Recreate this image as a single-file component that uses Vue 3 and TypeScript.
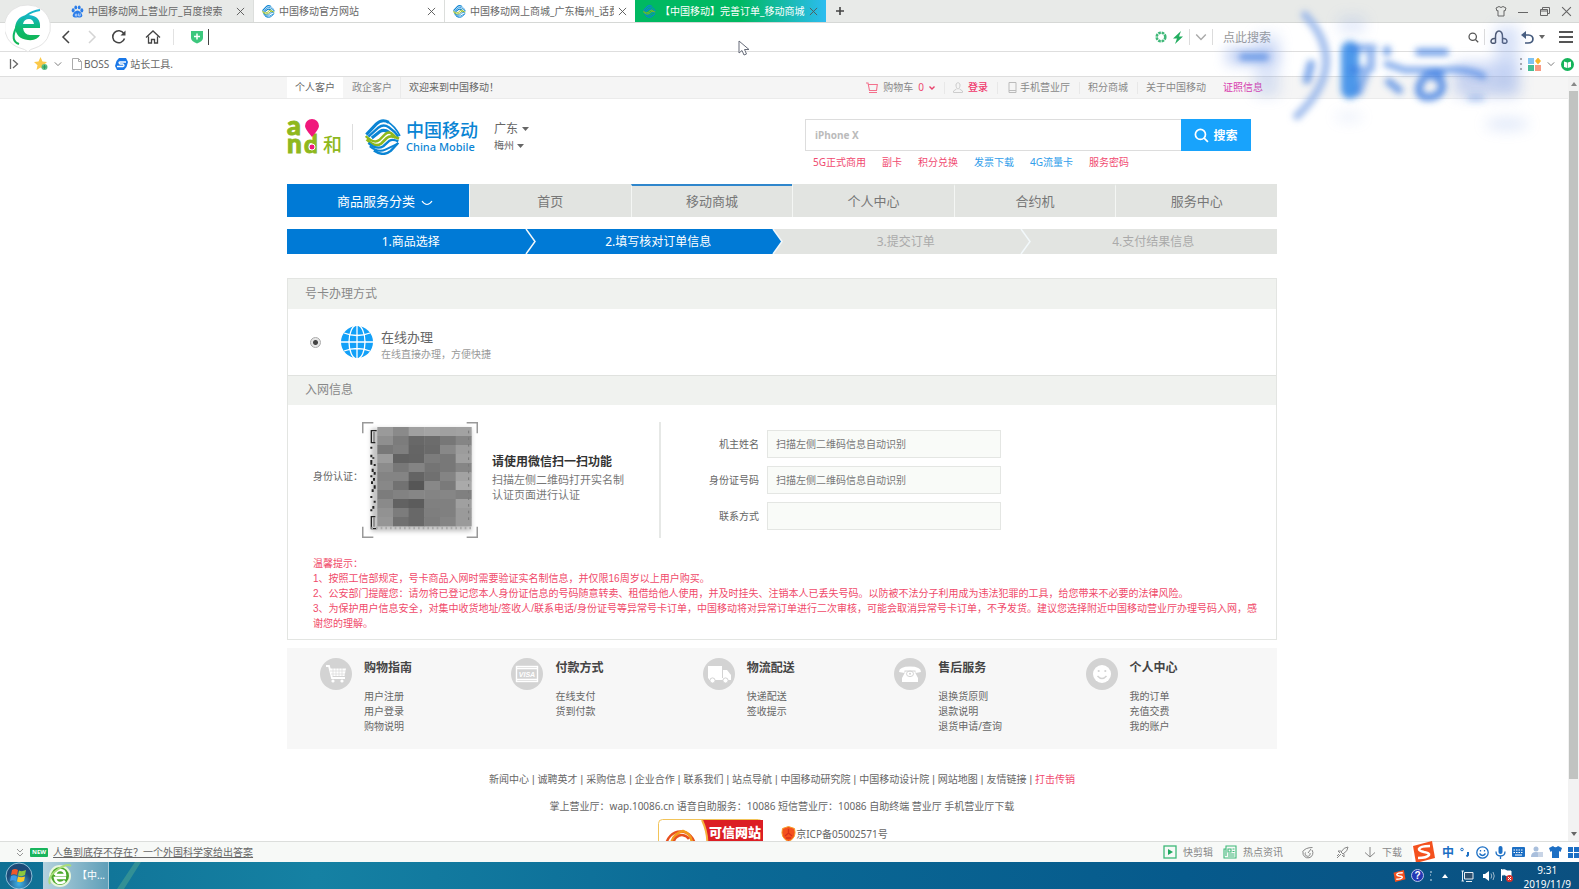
<script setup lang="ts">
import { ref } from 'vue'

interface LinkItem { text: string; tone?: string }
interface ServiceGroup { icon: string; title: string; links: string[] }

const tabs = [
  { title: '中国移动网上营业厅_百度搜索', kind: 'baidu' },
  { title: '中国移动官方网站', kind: 'mobile' },
  { title: '中国移动网上商城_广东梅州_话费', kind: 'mobile' },
  { title: '【中国移动】完善订单_移动商城', kind: 'active' },
]
const hotLinks: LinkItem[] = [
  { text: '5G正式商用', tone: 'pink' },
  { text: '副卡', tone: 'pink' },
  { text: '积分兑换', tone: 'pink' },
  { text: '发票下载', tone: 'sky' },
  { text: '4G流量卡', tone: 'sky' },
  { text: '服务密码', tone: 'pink' },
]
const navItems = ['首页', '移动商城', '个人中心', '合约机', '服务中心']
const steps = ['1.商品选择', '2.填写核对订单信息', '3.提交订单', '4.支付结果信息']
const fields = [
  { id: 'owner', label: '机主姓名', hint: '扫描左侧二维码信息自动识别' },
  { id: 'idno', label: '身份证号码', hint: '扫描左侧二维码信息自动识别' },
  { id: 'phone', label: '联系方式', hint: '' },
]
const tips = [
  '温馨提示：',
  '1、按照工信部规定，号卡商品入网时需要验证实名制信息，并仅限16周岁以上用户购买。',
  '2、公安部门提醒您：请勿将已登记您本人身份证信息的号码随意转卖、租借给他人使用，并及时挂失、注销本人已丢失号码。以防被不法分子利用成为违法犯罪的工具，给您带来不必要的法律风险。',
  '3、为保护用户信息安全，对集中收货地址/签收人/联系电话/身份证号等异常号卡订单，中国移动将对异常订单进行二次审核，可能会取消异常号卡订单，不予发货。建议您选择附近中国移动营业厅办理号码入网，感谢您的理解。',
]
const services: ServiceGroup[] = [
  { icon: 'cart', title: '购物指南', links: ['用户注册', '用户登录', '购物说明'] },
  { icon: 'card', title: '付款方式', links: ['在线支付', '货到付款'] },
  { icon: 'truck', title: '物流配送', links: ['快递配送', '签收提示'] },
  { icon: 'phone', title: '售后服务', links: ['退换货原则', '退款说明', '退货申请/查询'] },
  { icon: 'smile', title: '个人中心', links: ['我的订单', '充值交费', '我的账户'] },
]
const footLinks = ['新闻中心', '诚聘英才', '采购信息', '企业合作', '联系我们', '站点导航', '中国移动研究院', '中国移动设计院', '网站地图', '友情链接', '打击传销']

const mosaic: string[][] = [
  '9a 8a a0 a4 a0 a2', '8f 7c 68 6c 77 85', '78 7f 65 6a 88 9c', '9c 62 64 7c 78 a0',
  '8c 78 84 74 78 86', '84 84 64 70 84 a2', '88 72 56 88 7a aa', '7c 82 86 84 86 80',
  '8a 62 5c 80 80 a0', '92 7c 68 7e 80 9a', '96 70 68 7c 84 9a',
].map((row) => row.split(' ').map((v) => `#${v}${v}${v}`))

const province = ref('广东')
const city = ref('梅州')
const method = ref('online')
const keyword = ref('')
const address = ref('')
</script>

<template>
  <div class="screen">
    <svg class="defs" width="0" height="0" aria-hidden="true">
      <symbol id="cm" viewBox="0 0 106 106">
        <g fill="none">
          <path stroke="#0a84d4" stroke-width="9" d="M4 46 L33 15 Q50 -2 70 10" />
          <path stroke="#0a84d4" stroke-width="5" d="M66 8 Q88 20 103 50" />
          <path stroke="#0a84d4" stroke-width="7" d="M10 52 L40 25 Q54 14 70 24 Q88 36 98 52" />
          <path stroke="#0a84d4" stroke-width="9" d="M20 56 L44 37 Q56 29 72 40" />
          <path stroke="#8fb81d" stroke-width="7" d="M2 50 Q26 74 42 62 L58 46 Q74 30 90 56" />
          <path stroke="#8fb81d" stroke-width="8" d="M5 60 Q30 86 48 72 L64 56 Q76 46 100 58" />
          <path stroke="#0a84d4" stroke-width="7" d="M10 70 Q34 92 54 80 L72 64 Q82 58 98 66" />
          <path stroke="#0a84d4" stroke-width="6" d="M14 80 Q38 100 60 90 L94 74" />
          <path stroke="#0a84d4" stroke-width="7" d="M26 93 Q54 112 76 94 L98 70" />
        </g>
      </symbol>
      <symbol id="cross" viewBox="0 0 10 10"><path d="M1 1 L9 9 M9 1 L1 9" stroke="currentColor" fill="none" /></symbol>
      <symbol id="chev" viewBox="0 0 10 10"><path d="M1 3 L5 7 L9 3" stroke="currentColor" fill="none" stroke-width="1.2" /></symbol>
      <symbol id="lens" viewBox="0 0 14 14"><g fill="none" stroke="currentColor" stroke-width="1.6"><circle cx="6" cy="6" r="4.7" /><path d="M9.5 9.5 L13 13" /></g></symbol>
      <symbol id="sogou" viewBox="0 0 24 22">
        <path d="M1 5 L20 0 L23 17 L4 22 Z" fill="#f4511e" />
        <path d="M18 5 Q8 5 7 8 Q7 10 12 11 Q18 12 17 14 Q15 17 6 17" fill="none" stroke="#fff" stroke-width="2.6" />
      </symbol>
    </svg>

    <!-- browser chrome -->
    <header class="chrome">
      <div class="tabstrip">
        <div v-for="(t, i) in tabs" :key="i" class="tab" :class="[t.kind, { first: i === 0 }]">
          <svg v-if="t.kind === 'baidu'" class="fav" viewBox="0 0 12 12"><g fill="#2b7de9"><ellipse cx="2" cy="5" rx="1.4" ry="1.9" /><ellipse cx="4.4" cy="2.2" rx="1.3" ry="1.8" /><ellipse cx="7.6" cy="2.2" rx="1.3" ry="1.8" /><ellipse cx="10" cy="5" rx="1.4" ry="1.9" /><path d="M6 5 C8 5 10.500 8 10.500 9.800 C10 12.500 7.500 11.300 6 11.300 C4.500 11.300 2 12.500 1.500 9.800 C1.500 8 4 5 6 5Z" /></g><path d="M4 8.500h1.500v1.600H4z M7 7.800v2.300h1.500v-2.300" fill="none" stroke="#e9f1fc" stroke-width=".6" /></svg>
          <svg v-else class="fav"><use href="#cm" /></svg>
          <span class="tab-title">{{ t.title }}</span>
          <button class="bare tab-x" aria-label="关闭标签"><svg width="9" height="9"><use href="#cross" /></svg></button>
        </div>
        <button class="bare plus" aria-label="新建标签"><svg width="10" height="10" viewBox="0 0 10 10"><path d="M5 1V9M1 5H9" stroke="#444" stroke-width="1.6" /></svg></button>
        <div class="win-btns">
          <button class="bare" aria-label="皮肤"><svg width="12" height="12" viewBox="0 0 12 12"><path d="M4 1.500 L1 3 L2 6 L3 5.500 V11 H9 V5.500 L10 6 L11 3 L8 1.500 Q6 3.500 4 1.500Z" fill="none" stroke="#666" /></svg></button>
          <button class="bare" aria-label="最小化"><svg width="12" height="12" viewBox="0 0 12 12"><path d="M1 7.500H11" stroke="#666" /></svg></button>
          <button class="bare" aria-label="还原"><svg width="12" height="12" viewBox="0 0 12 12"><path d="M1.500 4.500H8.500V10.500H1.500ZM3.500 4.500V2.500H10.500V8.500H8.500M1.500 6h7" fill="none" stroke="#666" /></svg></button>
          <button class="bare" aria-label="关闭"><svg width="11" height="11"><use href="#cross" /></svg></button>
        </div>
      </div>

      <div class="addressbar">
        <div class="nav-icons">
          <button class="bare" aria-label="后退"><svg width="14" height="14" viewBox="0 0 14 14"><path d="M10 1 L4 7 L10 13" fill="none" stroke="#444" stroke-width="1.5" /></svg></button>
          <button class="bare" aria-label="前进"><svg width="14" height="14" viewBox="0 0 14 14"><path d="M4 1 L10 7 L4 13" fill="none" stroke="#d4d4d4" stroke-width="1.5" /></svg></button>
          <button class="bare" aria-label="刷新"><svg width="16" height="16" viewBox="0 0 16 16"><path d="M13.500 9.500 A6 6 0 1 1 12.800 4.500" fill="none" stroke="#444" stroke-width="1.500" /><path d="M14.500 1.500V6.500H9.500Z" fill="#444" /></svg></button>
          <button class="bare" aria-label="主页"><svg width="16" height="16" viewBox="0 0 16 16"><path d="M1 8.500 L8 2 L15 8.500 M3.500 7.500V14H6.500V10.500H9.500V14H12.500V7.500" fill="none" stroke="#444" stroke-width="1.300" /></svg></button>
        </div>
        <svg class="shield" width="12" height="14" viewBox="0 0 12 14"><path d="M0 1H12V8Q12 11 6 13.500Q0 11 0 8Z" fill="#3cc77d" /><path d="M6 3.500V9.500M3 6.500H9" stroke="#fff" stroke-width="1.500" /></svg>
        <span class="caret"></span>
        <input v-model="address" class="address" type="text" aria-label="地址栏" />
        <div class="addr-right">
          <svg width="12" height="12" viewBox="0 0 12 12"><circle cx="6" cy="6" r="4.300" fill="none" stroke="#3fb878" stroke-width="2.600" stroke-dasharray="2.600 .8" /></svg>
          <svg width="12" height="13" viewBox="0 0 12 13"><path d="M9 0 L1 7.500 H5 L3 13 L11 5.500 H7Z" fill="#22ad5f" /></svg>
          <i class="vr"></i>
          <svg width="12" height="12" class="soft"><use href="#chev" /></svg>
          <i class="vr"></i>
        </div>
        <input v-model="keyword" class="quick" type="text" aria-label="快速搜索" placeholder="点此搜索" />
        <div class="addr-end">
          <svg width="11" height="11" class="dark"><use href="#lens" /></svg>
          <i class="vr"></i>
          <svg width="18" height="15" viewBox="0 0 18 15"><path d="M5.500 13V7 C5 -1 13 -1 12.500 7 V13 M5.500 8.500 C2 8 1 10 1 11.500 C1 13.500 3 13.500 5.500 13 M12.500 8.500 C16 8 17 10 17 11.500 C17 13.500 15 13.500 12.500 13" fill="none" stroke="#444e63" stroke-width="1.500" /></svg>
          <svg class="undo" width="13" height="13" viewBox="0 0 13 13"><path d="M3 4H7.500C13.500 4 13.500 12 7 12H4" fill="none" stroke="#445a7c" stroke-width="1.700" /><path d="M5 0V8L0 4Z" fill="#445a7c" /></svg>
          <svg width="6" height="4" viewBox="0 0 6 4"><path d="M0 0H6L3 4Z" fill="#666" /></svg>
          <svg class="menu" width="14" height="12" viewBox="0 0 14 12"><path d="M0 1H14M0 6H14M0 11H14" stroke="#555" stroke-width="2" /></svg>
        </div>
      </div>

      <div class="bookmarks">
        <svg width="10" height="12" viewBox="0 0 10 12"><path d="M1.500 1V11M4 2L8.500 6L4 10" fill="none" stroke="#666" stroke-width="1.300" /></svg>
        <svg class="star" width="14" height="14" viewBox="0 0 14 14"><path d="M6.500 0L8.500 4.500L13 5L9.500 8.200L10.500 13L6.500 10.500L2.500 13L3.500 8.200L0 5L4.500 4.500Z" fill="#fbc94a" /><circle cx="10.500" cy="10" r="3" fill="#5cbf88" /><path d="M10.500 8V12M8.500 10H12.500" stroke="#2e9b60" /></svg>
        <svg width="8" height="8" class="grey"><use href="#chev" /></svg>
        <a href="#" class="bm boss"><svg width="10" height="12" viewBox="0 0 10 12"><path d="M.5 .5H6.500L9.500 3.500V11.500H.5ZM6.500 .5V3.500H9.500" fill="none" stroke="#aaa" /></svg>BOSS</a>
        <a href="#" class="bm"><svg width="13" height="12" viewBox="0 0 13 12"><path d="M4 0H11L13 4L11.500 9L9 12H2L0 8L1.500 3Z" fill="#1a78e8" /><path d="M11 4H5Q3 4.500 5 6H8Q10 7.500 8 8.500H2" fill="none" stroke="#fff" stroke-width="1.300" /></svg>站长工具.</a>
        <div class="bm-right">
          <svg width="2" height="12" viewBox="0 0 2 12"><path d="M1 0V12" stroke="#aaa" stroke-width="2" stroke-dasharray="2 3" /></svg>
          <svg width="13" height="13" viewBox="0 0 13 13"><rect width="6" height="6" fill="#7fc4f2" /><path d="M10 -.5L13 3L10 6.500L7 3Z" fill="#f7b52c" /><rect y="7" width="6" height="6" fill="#45bf94" /><rect x="7" y="7" width="6" height="6" fill="#f79a82" /></svg>
          <svg width="8" height="8" class="grey"><use href="#chev" /></svg>
          <svg width="13" height="13" viewBox="0 0 13 13"><circle cx="6.500" cy="6.500" r="6.500" fill="#15b35a" /><path d="M3 3.500L6.200 4.500V10L3 9ZM10 3.500L6.800 4.500V10L10 9Z" fill="#fff" /></svg>
        </div>
      </div>

      <svg class="ie-logo" width="46" height="54" viewBox="0 0 46 54">
        <defs><linearGradient id="eg" x1="0" y1="0" x2="0" y2="1"><stop offset="0" stop-color="#17b4d4" /><stop offset=".5" stop-color="#0dbb74" /><stop offset="1" stop-color="#12b555" /></linearGradient></defs>
        <path d="M23 5 A22 22 0 0 1 30 48 Q25 49 23 52 Q20 49 15 48 A22 22 0 0 1 23 5Z" fill="#fff" stroke="#e4e4e4" />
        <path d="M35 28 H18 Q19 35 25 35 H35 Q32 41 23 40 Q11 39 10 27 Q12 15 24 15 Q36 16 35 28 M18 24 H29 Q28 19 24 19 Q19 19 18 24Z" fill="url(#eg)" fill-rule="evenodd" />
        <path d="M35 10 Q20 12 11 28 Q5 41 14 44" fill="none" stroke="url(#eg)" stroke-width="2" />
      </svg>
    </header>

    <!-- web page -->
    <div class="viewport">
      <main class="page">
        <div class="topbar band">
          <div class="inner topbar-row">
            <a href="#" class="who on">个人客户</a>
            <a href="#" class="who">政企客户</a>
            <span class="hello">欢迎来到中国移动！</span>
            <div class="top-right">
              <a href="#" class="cart"><svg width="12" height="12" viewBox="0 0 12 12"><path d="M0 1H2L3.500 8.500H10.500L11.300 2.500H2.500M3 10.500H11" fill="none" stroke="#f4708c" stroke-width="1.100" /></svg>购物车 <b>0</b><svg width="6" height="4" viewBox="0 0 6 4"><path d="M.5 .5L3 3L5.500 .5" fill="none" stroke="#e8416c" stroke-width="1.400" /></svg></a>
              <a href="#" class="login"><svg width="10" height="11" viewBox="0 0 10 11"><path d="M3.500 7L.5 9V10.500H9.500V9L6.500 7M3 3C3 0 7 0 7 3C7 5 6 7 5 7C4 7 3 5 3 3Z" fill="none" stroke="#ccc" /></svg>登录</a>
              <a href="#" class="mobi"><svg width="9" height="11" viewBox="0 0 9 11"><path d="M1 .5H8V10.500H1ZM1 8.500H8" fill="none" stroke="#bbb" /></svg>手机营业厅</a>
              <a href="#" class="plain">积分商城</a>
              <a href="#" class="plain">关于中国移动</a>
              <a href="#" class="cert">证照信息</a>
            </div>
          </div>
        </div>

        <div class="band">
          <div class="inner header">
            <svg class="and-logo" width="56" height="36" viewBox="0 0 56 36">
              <g fill="#8fb81d" stroke="#8fb81d" font-family="Lato, sans-serif" font-weight="900"><text x="0" y="16" font-size="27">a</text><text x="0" y="34" font-size="26">n</text><text x="17" y="34" font-size="24">d</text><text x="36" y="33" font-size="19" font-weight="500" stroke="none" font-family="Noto Sans CJK SC, sans-serif">和</text></g>
              <path d="M25 18Q18 10 18 7A7 7 0 0 1 32 7Q32 10 25 18Z" fill="#f0187c" />
              <circle cx="25" cy="28" r="3" fill="#f0187c" stroke="#fff" />
            </svg>
            <i class="logo-split"></i>
            <svg class="cm-logo" width="36" height="36"><use href="#cm" /></svg>
            <div class="brand"><strong>中国移动</strong><span>China Mobile</span></div>
            <div class="region">
              <label class="pick prov"><select v-model="province" aria-label="省份"><option>广东</option></select><svg width="7" height="4" viewBox="0 0 7 4"><path d="M0 0H7L3.500 4Z" fill="#666" /></svg></label>
              <label class="pick"><select v-model="city" aria-label="城市"><option>梅州</option></select><svg width="7" height="4" viewBox="0 0 7 4"><path d="M0 0H7L3.500 4Z" fill="#666" /></svg></label>
            </div>
            <div class="search">
              <form class="search-row" @submit.prevent>
                <input type="text" aria-label="商品搜索" placeholder="iPhone X" />
                <button type="submit"><svg width="15" height="15"><use href="#lens" /></svg>搜索</button>
              </form>
              <div class="hot"><a v-for="h in hotLinks" :key="h.text" href="#" :class="h.tone">{{ h.text }}</a></div>
            </div>
          </div>
        </div>

        <div class="band">
          <div class="inner">
            <nav class="mainnav">
              <a href="#" class="all">商品服务分类<svg width="12" height="10" viewBox="0 0 12 10"><path d="M1 4Q3.500 7.500 6 7.500T11 4" stroke="currentColor" fill="none" stroke-width="1.200" /></svg></a>
              <a v-for="(n, i) in navItems" :key="n" href="#" :class="{ current: i === 1 }">{{ n }}</a>
            </nav>

            <ol class="steps">
              <li v-for="(s, i) in steps" :key="s" :class="{ done: i < 2 }">
                {{ s }}
                <svg v-if="i < 3" class="tip" :class="{ turn: i === 1 }" width="12" height="25" viewBox="0 0 12 25" preserveAspectRatio="none">
                  <path v-if="i === 1" d="M1 0H12V25H1L10 12.500Z" fill="#e2e4e1" />
                  <path d="M1 0L10 12.500L1 25" fill="none" stroke="#f2f8fb" stroke-width="1.500" />
                </svg>
              </li>
            </ol>

            <section class="panel">
              <h2>号卡办理方式</h2>
              <label class="method">
                <input v-model="method" type="radio" name="method" value="online" />
                <svg width="32" height="32" viewBox="0 0 32 32"><circle cx="16" cy="16" r="16" fill="#12a0f8" /><g fill="none" stroke="#fff" stroke-width="1.300"><path d="M16 0V32M0 16H32M3 7Q16 12 29 7M3 25Q16 20 29 25" /><ellipse cx="16" cy="16" rx="8" ry="17" /></g></svg>
                <span class="method-text"><strong>在线办理</strong><span>在线直接办理，方便快捷</span></span>
              </label>
              <h2 class="second">入网信息</h2>
              <div class="identity">
                <span class="id-label">身份认证：</span>
                <svg class="qr" width="116" height="116" viewBox="0 0 348 348">
                  <defs><filter id="soft"><feGaussianBlur stdDeviation="7" /></filter></defs>
                  <path d="M2 34V2H34M314 2H346V34M346 314V346H314M34 346H2V314" fill="none" stroke="#999" stroke-width="5" />
                  <rect x="28" y="20" width="300" height="308" fill="#c4c4c4" filter="url(#soft)" />
                  <path d="M44 26H28V62H40M40 284H28V320H44" fill="none" stroke="#222" stroke-width="4" />
                  <path d="M36 30V60M36 286V314" stroke="#777" stroke-width="4" />
                  <path d="M28 74V80M28 98V106M34 106V110M28 114V128M38 126V132M32 140V150M38 150V158M28 160V166M36 168V176M30 178V186M38 190V200M32 202V210M28 222V228M38 236V242M34 252V260M28 262V268" stroke="#222" stroke-width="6" />
                  <path d="M28 318H328" stroke="#aaa" stroke-width="8" stroke-dasharray="5 9" />
                  <g v-for="(row, r) in mosaic" :key="r"><rect v-for="(c, k) in row" :key="k" :x="46 + k * 47" :y="15 + r * 27" width="48" height="28" :fill="c" /></g>
                  <path d="M320 26V302" stroke="#777" stroke-width="3" stroke-dasharray="8 12" />
                </svg>
                <div class="scan"><strong>请使用微信扫一扫功能</strong><p>扫描左侧二维码打开实名制<br />认证页面进行认证</p></div>
                <i class="split"></i>
                <div class="fields">
                  <template v-for="f in fields" :key="f.id">
                    <label :for="f.id">{{ f.label }}</label>
                    <input :id="f.id" type="text" :placeholder="f.hint" />
                  </template>
                </div>
              </div>
              <div class="tips"><p v-for="t in tips" :key="t">{{ t }}</p></div>
            </section>

            <section class="services">
              <div v-for="s in services" :key="s.title" class="service">
                <svg width="32" height="32" viewBox="0 0 32 32">
                  <circle cx="16" cy="16" r="16" fill="#d3d3d3" />
                  <g v-if="s.icon === 'cart'"><path d="M6 8H9L12 20H25" fill="none" stroke="#fff" stroke-width="1.800" /><path d="M9.500 10.500H26L24.500 18H11.500Z" fill="#fff" /><path d="M13 10V18M16 10V18M19 10V18M22 10V18M10 13H26M11 16H25" stroke="#d3d3d3" stroke-width=".6" /><circle cx="13" cy="23" r="1.600" fill="#fff" /><circle cx="22" cy="23" r="1.600" fill="#fff" /></g>
                  <g v-else-if="s.icon === 'card'"><rect x="5.500" y="8.500" width="21" height="15" fill="none" stroke="#fff" stroke-width="1.400" /><path d="M6 10.500H26M6 21.500H26" stroke="#fff" stroke-width="1.600" /><text x="16" y="18.500" font-size="7" font-weight="bold" font-style="italic" text-anchor="middle" font-family="Liberation Sans, sans-serif" fill="#fff">VISA</text></g>
                  <g v-else-if="s.icon === 'truck'" fill="#fff"><rect x="5" y="8" width="14" height="12.500" /><path d="M20 12H24L28 17V21H20Z" /><rect x="6" y="20" width="22" height="2" /><circle cx="9.500" cy="22.500" r="2.600" stroke="#d3d3d3" /><circle cx="22.500" cy="22.500" r="2.600" stroke="#d3d3d3" /></g>
                  <g v-else-if="s.icon === 'phone'" fill="#fff"><path d="M5 14Q5 8.500 16 8.500Q27 8.500 27 14L21.500 15V12.500H10.500V15Z" /><path d="M11.500 13.500H20.500L24 20V24H8V20Z" /><ellipse cx="16" cy="15.800" rx="3.500" ry="2.800" fill="none" stroke="#d3d3d3" /><circle cx="16" cy="15.800" r="1" fill="#d3d3d3" /></g>
                  <g v-else><circle cx="16" cy="16" r="9" fill="#fff" /><circle cx="12.700" cy="13" r="1.100" fill="#d3d3d3" /><circle cx="19.300" cy="13" r="1.100" fill="#d3d3d3" /><path d="M11.500 18Q16 23 20.500 18" fill="none" stroke="#d3d3d3" stroke-width="1.500" /></g>
                </svg>
                <div><h3>{{ s.title }}</h3><a v-for="l in s.links" :key="l" href="#">{{ l }}</a></div>
              </div>
            </section>

            <footer class="foot">
              <p class="foot-links"><template v-for="(l, i) in footLinks" :key="l"><span v-if="i" class="bar">|</span><a href="#" :class="{ pink: i === 10 }">{{ l }}</a></template></p>
              <p>掌上营业厅：wap.10086.cn 语音自助服务：10086 短信营业厅：10086 自助终端 营业厅 手机营业厅下载</p>
              <div class="badges">
                <svg width="105" height="36" viewBox="0 0 105 36">
                  <rect x=".5" y=".5" width="104" height="35" rx="4" fill="#fff" stroke="#f2c45a" />
                  <path d="M44 1H105V36H48Q52 18 44 1Z" fill="#dc1e24" /><path d="M44 1Q52 18 48 36" fill="none" stroke="#f6b13c" stroke-width="2" />
                  <g fill="none" stroke-width="2.500"><path d="M8 28A14 15 0 0 1 37 28" stroke="#e8501f" /><path d="M13 30Q12 16 25 12Q34 15 34 26" stroke="#f39a1c" /><path d="M17 32A8 9 0 0 1 31 20" stroke="#e8501f" /></g>
                  <text x="51" y="18" font-size="13" font-weight="900" fill="#fff" font-family="Noto Sans CJK SC, sans-serif">可信网站</text>
                </svg>
                <span class="icp"><svg width="15" height="16" viewBox="0 0 15 16"><path d="M7.500 .5L13.500 2.500Q16 12 7.500 15.500Q-1 12 1.500 2.500Z" fill="#f4511e" stroke="#f8a02c" /><path d="M7.500 3V8M4 10L7.500 7L11 10M5 12H10" stroke="#d8321c" fill="none" stroke-width="1.300" /></svg>京ICP备05002571号</span>
              </div>
            </footer>
          </div>
        </div>
      </main>
      <div class="scrollbar" aria-hidden="true">
        <svg width="6" height="4" viewBox="0 0 6 4"><path d="M0 4H6L3 0Z" fill="#888" /></svg>
        <span class="thumb"></span>
        <svg width="6" height="4" viewBox="0 0 6 4"><path d="M0 0H6L3 4Z" fill="#666" /></svg>
      </div>
    </div>

    <!-- browser status bar -->
    <div class="status">
      <svg width="8" height="9" viewBox="0 0 8 9"><path d="M1 1L4 4L7 1M1 5L4 8L7 5" fill="none" stroke="#999" /></svg>
      <b class="new">NEW</b>
      <a href="#" class="news">人鱼到底存不存在？一个外国科学家给出答案</a>
      <div class="status-right">
        <button class="bare"><svg width="14" height="14" viewBox="0 0 14 14"><rect x="1" y="1" width="12" height="12" fill="none" stroke="#3db878" stroke-width="1.300" /><path d="M5 4L10 7L5 10Z" fill="#1fa860" /></svg>快剪辑</button>
        <button class="bare"><svg width="14" height="14" viewBox="0 0 14 14"><path d="M3 1H13V13H1V4H3ZM3 4V11M5 4H8V7H5ZM9.500 4H11.500M9.500 6.500H11.500M5 9H11.500M5 11H11.500" fill="none" stroke="#3db878" stroke-width="1.100" /></svg>热点资讯</button>
        <button class="bare" aria-label="加速"><svg width="13" height="13" viewBox="0 0 13 13"><path d="M1.500 6Q4 1.500 11.500 1.500M11 4A5 5 0 1 1 2 6M7 7L10 3M4.500 6.500A2.500 2.500 0 1 0 9 7" fill="none" stroke="#888" /></svg></button>
        <button class="bare rocket" aria-label="清理"><svg width="13" height="13" viewBox="0 0 13 13"><path d="M12 1Q8 1 5 6L7 8Q12 5 12 1ZM5 5L2 5L4 7M8 8L8 11L6 9M5 8L1 12M3 8L1 10" fill="none" stroke="#888" /></svg></button>
        <button class="bare"><svg width="12" height="12" viewBox="0 0 12 12"><path d="M6 1V11M1 6.500L6 11L11 6.500" fill="none" stroke="#888" /></svg>下载</button>
        <div class="ime">
          <svg class="sg" width="24" height="22"><use href="#sogou" /></svg>
          <b>中</b>
          <svg width="10" height="10" viewBox="0 0 10 10"><circle cx="2" cy="2.500" r="1.300" fill="none" stroke="#1c6fc4" /><path d="M8 5V8L6.500 9.500" stroke="#1c6fc4" stroke-width="2" fill="none" /></svg>
          <svg width="13" height="13" viewBox="0 0 13 13"><g fill="none" stroke="#1c6fc4" stroke-width="1.300"><circle cx="6.500" cy="6.500" r="5.700" /><path d="M3.500 7.500Q6.500 11.500 9.500 7.500M4.500 4V5.500M8.500 4V5.500" /></g></svg>
          <svg width="11" height="13" viewBox="0 0 11 13"><rect x="3.500" width="4" height="8" rx="2" fill="#1c6fc4" /><path d="M1 5.500Q1 10 5.500 10T10 5.500M5.500 10V13" fill="none" stroke="#1c6fc4" stroke-width="1.300" /></svg>
          <svg width="13" height="10" viewBox="0 0 13 10"><rect width="13" height="10" rx="1" fill="#1c6fc4" /><path d="M1.500 3H11.500M1.500 5.500H11.500" stroke="#fff" stroke-dasharray="1.500 1" /><path d="M3 8H10" stroke="#fff" /></svg>
          <svg width="12" height="12" viewBox="0 0 12 12"><circle cx="5" cy="3" r="2.500" fill="#a9bfdc" /><path d="M0 11Q0 6 5 6T10 11Z" fill="#a9bfdc" /><rect x="7" y="6" width="5" height="5" fill="#c8d4e6" /></svg>
          <svg width="13" height="12" viewBox="0 0 13 12"><path d="M4 0L0 2L1.500 6L3 5V12H10V5L11.500 6L13 2L9 0Q6.500 2.500 4 0Z" fill="#1c6fc4" /></svg>
          <svg width="11" height="11" viewBox="0 0 11 11"><path d="M0 0H5V5H0ZM6 0H11V5H6ZM0 6H5V11H0ZM6 6H11V11H6Z" fill="#1c6fc4" /></svg>
        </div>
      </div>
    </div>

    <!-- desktop taskbar -->
    <div class="taskbar">
      <button class="bare start" aria-label="开始">
        <svg width="28" height="28" viewBox="0 0 28 28"><defs><radialGradient id="orb" cx=".5" cy=".8"><stop offset="0" stop-color="#3fb4e8" /><stop offset="1" stop-color="#1c4a78" /></radialGradient></defs><circle cx="14" cy="14" r="13" fill="url(#orb)" stroke="#8fc0d8" /><path d="M7 8Q10 6 13 8L12 13Q9 11.500 6 13Z" fill="#f0582a" /><path d="M14 8.500Q17 10 21 8L20 13Q17 15 13 13.500Z" fill="#8cc63e" /><path d="M6 14Q9 12.500 12 14.500L11 19Q8 17.500 5 19Z" fill="#3f9be8" /><path d="M13 14.500Q16 16 20 14.500L19 19Q16 21 12 19.500Z" fill="#fcc829" /></svg>
      </button>
      <button class="bare task">
        <svg width="26" height="26" viewBox="0 0 26 26"><circle cx="13" cy="13" r="10" fill="#4aa82a" stroke="#e8f6dc" stroke-width="2" /><path d="M19 15H8Q9 20 13 20Q16 20 18 18M8 12H18Q18 7 13 7Q9 7 8 12" fill="none" stroke="#fff" stroke-width="2.500" /><path d="M3 21Q0 14 10 7T24 3" fill="none" stroke="#a9dd7a" stroke-width="2" /></svg>
        【中...
      </button>
      <svg class="streak" width="60" height="27" viewBox="0 0 60 27" preserveAspectRatio="none"><path d="M8 27L26 0H32L15 27Z" fill="#6fbf8c" opacity=".35" /></svg>
      <div class="tray">
        <svg width="13" height="12" viewBox="0 0 24 22"><use href="#sogou" width="24" height="22" /></svg>
        <svg width="13" height="13" viewBox="0 0 13 13"><circle cx="6.500" cy="6.500" r="6" fill="#2438b4" stroke="#b8c4e8" /><text x="6.500" y="10" font-size="10" font-weight="bold" text-anchor="middle" fill="#fff" font-family="Liberation Sans, sans-serif">?</text></svg>
        <svg width="4" height="10" viewBox="0 0 4 10"><path d="M1 1h2M1 4h1M1 9h2" stroke="#cfe0ec" /></svg>
        <svg class="up" width="6" height="4" viewBox="0 0 6 4"><path d="M0 4H6L3 0Z" fill="#fff" /></svg>
        <svg class="net" width="13" height="12" viewBox="0 0 13 12"><path d="M3.500 2.500H12V9H3.500ZM5 11.500H11M1.500 1V11M.5 1H3M.5 11H3" fill="#2d4f6c" stroke="#e6eef4" /></svg>
        <svg width="12" height="12" viewBox="0 0 12 12"><path d="M0 4H2L6 1V11L2 8H0Z" fill="#fff" /><path d="M8 3.500Q9.500 6 8 8.500M10 2Q12.500 6 10 10" stroke="#9cb8cc" fill="none" /></svg>
        <svg width="13" height="13" viewBox="0 0 13 13"><path d="M1.500 0V12M2 1Q5 0 7 2H11V7H7Q5 5 2 6Z" fill="#fff" stroke="#fff" /><circle cx="9.500" cy="9.500" r="3.500" fill="#d8312c" /><path d="M8 8L11 11M11 8L8 11" stroke="#fff" /></svg>
        <time class="clock"><span>9:31</span><span>2019/11/9</span></time>
      </div>
    </div>

    <!-- smeared stamp and pointer lying over the window -->
    <svg class="smear" width="380" height="150" viewBox="0 0 380 150" aria-hidden="true">
      <defs>
        <filter id="b3" x="-20%" y="-20%" width="140%" height="140%"><feGaussianBlur stdDeviation="3" /></filter>
        <filter id="b6" x="-30%" y="-30%" width="160%" height="160%"><feGaussianBlur stdDeviation="7" /></filter>
      </defs>
      <g filter="url(#b6)" fill="#7f9fe8" opacity=".5"><rect x="28" y="48" width="52" height="16" /><rect x="56" y="34" width="24" height="62" opacity=".5" /><rect x="256" y="62" width="64" height="34" opacity=".8" /><rect x="296" y="26" width="24" height="66" opacity=".6" /><rect x="140" y="16" width="26" height="18" opacity=".4" /><ellipse cx="308" cy="124" rx="22" ry="6" opacity=".5" /><ellipse cx="150" cy="117" rx="14" ry="3" opacity=".5" /></g>
      <g filter="url(#b3)" fill="none" stroke="#3578e0" stroke-linecap="round">
        <path d="M44 57H66" stroke-width="8" opacity=".6" />
        <path d="M106 15Q152 64 98 116" stroke-width="8" stroke="#8fb0ea" opacity=".8" />
        <path d="M112 64L108 80" stroke-width="9" opacity=".6" />
        <path d="M151 50V90" stroke-width="18" opacity=".85" stroke="#2f86e8" />
        <path d="M156 48H174M172 48V68M154 70H168L160 92" stroke-width="8" opacity=".55" />
        <path d="M188 64L206 70H246Q266 68 284 76" stroke-width="7" opacity=".6" />
        <path d="M190 82L200 90M188 50V52" stroke-width="8" opacity=".65" />
        <path d="M220 52H246" stroke-width="8" opacity=".65" />
        <path d="M242 74C224 68 212 94 226 97C244 100 250 80 234 76" stroke-width="8" opacity=".75" />
        <path d="M272 98H282" stroke-width="7" opacity=".3" />
      </g>
    </svg>
    <svg class="pointer" width="12" height="16" viewBox="0 0 12 16" aria-hidden="true"><path d="M1 1V13L4 10.500L6 15L8.500 14L6.500 9.500H11Z" fill="#fff" stroke="#666b78" /></svg>
  </div>
</template>

<style>
body { margin: 0; }
</style>

<style scoped>
.screen { position: relative; display: flex; flex-direction: column; height: 100vh; overflow: hidden; background: #fff; color: #666; font: 10px/15px "Noto Sans", "Noto Sans CJK SC", sans-serif; }
.screen * { box-sizing: border-box; }
.defs { position: absolute; }
a { color: inherit; text-decoration: none; }
svg { flex: none; display: block; }
p, h2, h3, ol { margin: 0; padding: 0; font-weight: normal; }
button, input, select { font: inherit; color: inherit; }
input { min-width: 0; outline: 0; border-radius: 0; }
.bare { display: flex; align-items: center; padding: 0; border: 0; background: none; }

.chrome { position: relative; flex: none; }
.tabstrip { display: flex; height: 23px; background: #e8eae8; border-bottom: 1px solid #d6d8d6; }
.tab { display: flex; align-items: center; width: 191px; padding: 0 8px; gap: 4px; background: #fff; border-left: 1px solid #dcdedc; }
.tab.first { width: 253px; padding-left: 71px; background: transparent; border: 0; }
.tab.active { background: linear-gradient(90deg, #00b962 55%, #2cbcf0); color: #fff; border: 0; }
.fav { width: 13px; height: 13px; }
.tab-title { flex: 1; overflow: hidden; white-space: nowrap; }
.tab-x { color: #555; }
.plus { padding-left: 9px; }
.win-btns { display: flex; align-items: center; gap: 10px; margin-left: auto; padding-right: 7px; color: #666; }

.addressbar { display: flex; align-items: center; height: 29px; padding: 0 6px 0 59px; border-bottom: 1px solid #dedede; }
.nav-icons { display: flex; align-items: center; gap: 12px; height: 16px; padding-right: 12px; border-right: 1px solid #e2e2e2; }
.nav-icons .bare:nth-child(4) { padding-left: 6px; }
.shield { margin-left: 17px; }
.caret { width: 1px; height: 16px; margin-left: 5px; background: #444; }
.address { flex: 1; height: 20px; border: 0; background: none; }
.addr-right { display: flex; align-items: center; gap: 5px; }
.vr { width: 1px; height: 16px; background: #dcdcdc; }
.soft { color: #aaa; }
.quick { width: 255px; padding: 0 0 0 10px; border: 0; background: none; font-size: 12px; }
.quick::placeholder { color: #999; opacity: 1; }
.addr-end { display: flex; align-items: center; gap: 5px; color: #555; }
.undo { margin-left: 8px; }
.addr-end .menu { margin-left: 9px; }

.bookmarks { display: flex; align-items: center; gap: 6px; height: 25px; padding: 0 5px 0 9px; border-bottom: 1px solid #dedede; }
.star { margin-left: 9px; }
.grey { color: #777; }
.bm { display: flex; align-items: center; gap: 2px; }
.boss { padding-left: 4px; }
.bm-right { display: flex; align-items: center; gap: 6px; margin-left: auto; }
.ie-logo { position: absolute; left: 5px; top: 0; }

.viewport { flex: 1; min-height: 0; display: flex; overflow: hidden; }
.page { flex: 1; min-width: 0; overflow: hidden; }
.band { display: grid; grid-template-columns: 287fr minmax(0, 990px) 291fr; }
.inner { grid-column: 2; }
.topbar { background: #f5f5f5; border-bottom: 1px solid #ebebeb; }
.topbar-row { display: flex; align-items: center; height: 21px; color: #888; white-space: nowrap; }
.who { padding: 3px 8px; border-right: 1px solid #eaeaea; }
.who + .who { padding-left: 9px; }
.who.on { background: #fff; color: #666; border: 0; }
.hello { padding-left: 8px; color: #666; }
.top-right { display: flex; align-items: center; gap: 8px; margin-left: auto; padding-right: 14px; }
.top-right a { display: flex; align-items: center; gap: 5px; height: 12px; padding-right: 9px; border-right: 1px solid #e8e8e8; }
.top-right .mobi { gap: 3px; padding-left: 2px; }
.top-right .plain + .plain, .top-right .cert { border: 0; }
.top-right .cert { padding-right: 0; color: #d83cae; }
.cart b { color: #ee4a70; font-weight: normal; }
.login { color: #f0386c; font-weight: 500; }

.header { display: flex; height: 85px; padding-top: 20px; align-items: flex-start; }
.and-logo { overflow: visible; }
.logo-split { width: 1px; height: 26px; margin: 5px 12px 0 9px; background: #ddd; }
.brand { display: flex; flex-direction: column; margin-left: 5px; padding-top: 1px; color: #0a84d4; }
.brand strong { font-size: 18px; line-height: 20px; font-weight: 500; }
.brand span { font-weight: 500; font-size: 11px; line-height: 14px; }
.region { display: flex; flex-direction: column; margin-left: 16px; padding-top: 1px; }
.pick { display: flex; align-items: center; gap: 3px; height: 17px; }
.pick.prov { font-size: 12px; }
.pick select { appearance: none; padding: 0; border: 0; background: none; }
.search { width: 446px; margin-left: auto; margin-right: 26px; }
.search-row { display: flex; height: 32px; }
.search-row input { flex: 1; padding: 0 9px; border: 1px solid #ddd; border-right: 0; font-weight: bold; }
.search-row input::placeholder { color: #bbb; opacity: 1; }
.search-row button { display: flex; align-items: center; justify-content: center; gap: 4px; width: 70px; padding: 0; border: 0; background: #18a3fc; color: #fff; font-size: 12px; font-weight: bold; }
.hot { display: flex; gap: 16px; padding: 4px 8px 0; }
.pink { color: #f04a70; }
.sky { color: #2f9dea; }

.mainnav { display: flex; height: 33px; font-size: 13px; }
.mainnav a { flex: 1; display: flex; align-items: center; justify-content: center; background: #e2e4e1; border-top: 2px solid #e2e4e1; color: #777; }
.mainnav a + a { border-left: 1px solid #f4f6f4; }
.mainnav .all { flex: none; width: 182px; gap: 6px; background: #007ad6; border-top-color: #007ad6; color: #fff; padding-left: 14px; }
.mainnav .current { border-top-color: #2f86cc; }

.steps { display: grid; grid-template-columns: repeat(4, 1fr); height: 25px; margin-top: 12px; list-style: none; font-size: 12px; line-height: 25px; text-align: center; }
.steps li { position: relative; background: #e2e4e1; color: #aaa; }
.steps .done { background: #007ad6; color: #fff; }
.tip { position: absolute; right: -2px; top: 0; z-index: 1; }
.tip.turn { right: -2px; }

.panel { margin-top: 24px; border: 1px solid #e3e5e2; }
.panel h2 { height: 30px; padding-left: 17px; background: #f0f2ef; font-size: 12px; line-height: 30px; color: #888; }
.panel .second { border-top: 1px solid #e0e2df; line-height: 28px; }
.method { display: flex; align-items: center; height: 66px; padding-left: 22px; }
.method input { width: 11px; height: 11px; margin: 0 20px 0 0; appearance: none; border: 1px solid #aaa; border-radius: 50%; background: radial-gradient(circle, #444 2px, #e6e6e6 3px); }
.method-text { display: flex; flex-direction: column; margin-left: 8px; padding-top: 4px; color: #999; }
.method-text strong { font-size: 13px; font-weight: normal; line-height: 20px; color: #666; }
.identity { display: flex; align-items: center; padding: 17px 0 0 25px; }
.id-label { width: 49px; padding-bottom: 8px; white-space: nowrap; }
.scan { width: 167px; margin-left: 14px; padding-bottom: 6px; font-size: 11px; color: #777; }
.scan strong { display: block; font-size: 12px; line-height: 20px; color: #333; }
.split { align-self: stretch; width: 2px; background: #e6e8e6; }
.fields { display: grid; grid-template-columns: 98px 234px; gap: 8px; align-items: center; text-align: right; }
.fields input { height: 28px; padding: 0 8px; border: 1px solid #e4e6e3; background: #f9fbf8; }
.fields input::placeholder { color: #777; opacity: 1; }
.tips { padding: 18px 17px 8px 25px; color: #f04a6a; font-family: "Liberation Sans", "Noto Sans CJK SC", sans-serif; }

.services { display: grid; grid-template-columns: repeat(5, 1fr); min-height: 101px; margin-top: 8px; padding: 10px 0 14px 33px; background: #f7f7f7; }
.service { display: flex; gap: 12px; }
.service h3 { margin-bottom: 11px; font-size: 12px; line-height: 20px; font-weight: bold; color: #444; }
.service a { display: block; }

.foot { padding-top: 23px; text-align: center; white-space: nowrap; }
.foot p + p { margin-top: 12px; }
.bar { margin: 0 3px; font-family: "Liberation Sans", sans-serif; }
.badges { display: flex; justify-content: center; gap: 18px; padding-top: 5px; padding-right: 18px; }
.icp { display: flex; align-items: center; height: 30px; }

.scrollbar { display: flex; flex-direction: column; align-items: center; width: 11px; padding: 5px 0; background: #f2f2f2; }
.thumb { flex: 0 1 688px; width: 9px; margin: 5px 0 auto; background: #c1c3c1; }

.status { display: flex; align-items: center; height: 21px; flex: none; padding-left: 16px; background: #f7f9f7; border-top: 1px solid #dcdedc; }
.new { margin: 0 5px 0 6px; padding: 0 2px; border-radius: 1px; background: #18b45c; color: #fff; font-size: 6px; line-height: 9px; }
.news { text-decoration: underline; }
.status-right { display: flex; align-items: center; gap: 10px; margin-left: auto; color: #888; }
.status-right .bare { gap: 6px; }
.status-right .bare:nth-child(3) { margin-left: 8px; }
.rocket { margin: 0 5px 0 12px; }
.ime { display: flex; align-items: center; gap: 6px; height: 20px; background: #fff; color: #1c6fc4; }
.ime b { font-size: 12px; }

.taskbar { position: relative; display: flex; align-items: center; height: 27px; flex: none; overflow: hidden; background: linear-gradient(90deg, #0f7094, #1581a3 20%, #0b6a96 45%, #065a8c 75%, #0b5080); color: #fff; }
.start { width: 43px; padding-left: 5px; }
.task { align-self: stretch; width: 66px; gap: 4px; padding-left: 4px; background: linear-gradient(90deg, #b5d2de, #5f9fb8); border-right: 1px solid #a4c8d6; white-space: nowrap; }
.tray { display: flex; align-items: center; gap: 5px; margin-left: auto; padding-right: 8px; }
.up { margin: 0 8px 0 4px; }
.net { margin-right: 4px; }
.clock { display: flex; flex-direction: column; margin-left: 6px; padding-top: 3px; text-align: center; line-height: 14px; }

.smear { position: absolute; right: 0; top: 0; pointer-events: none; }
.pointer { position: absolute; left: 738px; top: 40px; pointer-events: none; }
</style>
